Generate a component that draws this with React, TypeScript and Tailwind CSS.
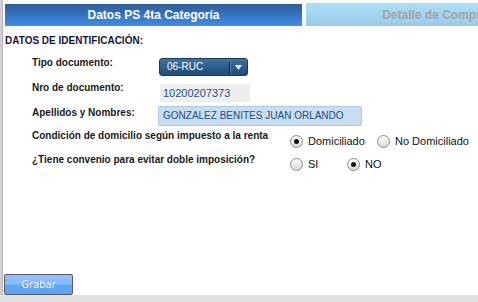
const arial = "font-['Liberation_Sans',Arial,sans-serif]";

function Radio({ checked }: { checked?: boolean }) {
  return (
    <span className="flex h-[13px] w-[13px] shrink-0 items-center justify-center rounded-full border border-[#8c8c8c] bg-gradient-to-b from-[#ffffff] to-[#dadada]">
      {checked && <span className="h-[5px] w-[5px] rounded-full bg-[#111]" />}
    </span>
  );
}

function RadioItem({ label, checked, w }: { label: string; checked?: boolean; w: string }) {
  return (
    <div className={`flex items-center gap-[5px] ${w}`}>
      <Radio checked={checked} />
      <span className="whitespace-nowrap text-[11px] leading-[13px] text-[#111]">{label}</span>
    </div>
  );
}

export default function App() {
  return (
    <div className={`flex h-[302px] w-[478px] flex-col overflow-hidden bg-white ${arial}`}>
      {/* main panel with left border */}
      <div className="flex flex-1 flex-col shadow-[inset_2px_0_0_#d2d2d2,inset_3px_0_0_#b4b4b4] pl-[3px]">
        {/* tabs */}
        <div className="flex items-start gap-[4px] overflow-hidden pl-[2px] pt-[3px]">
          <div className="mt-[1px] flex h-[22px] w-[297px] shrink-0 items-center justify-center bg-gradient-to-b from-[#2d5c9c] to-[#3d8de9] text-[12px] font-bold text-white">
            Datos PS 4ta Categoría
          </div>
          <div className="flex h-[23px] w-[297px] shrink-0 items-center justify-center bg-gradient-to-b from-[#aadff7] to-[#9bcae9] text-[12px] font-bold text-[#a4a4a4]">
            <span className="whitespace-nowrap">Detalle de Comprobantes</span>
          </div>
        </div>

        <div className="mt-[9px] pl-[2px] text-[10px] font-bold leading-[12px] text-[#16163a]">
          DATOS DE IDENTIFICACIÓN:
        </div>

        <div className="mt-[10px] flex flex-col pl-[29px] text-[10px] font-bold leading-[12px] text-[#1a1a1a]">
          {/* Tipo documento */}
          <div className="flex h-[25px] items-start">
            <div className="w-[127px]">Tipo documento:</div>
            <div className="mt-[1px] flex h-[18px] w-[89px] items-center rounded-[3px] border border-[#1b3957] bg-gradient-to-b from-[#3e72a2] to-[#1f4b77] pl-[7px] font-normal text-white">
              <span className="flex-1">06-RUC</span>
              <span className="h-[11px] w-px bg-[#0d1a28] shadow-[1px_0_0_#5b86ad]" />
              <svg className="mx-[5px]" width="7" height="5" viewBox="0 0 7 5">
                <path d="M0 0h7L3.5 5z" fill="#e8eef5" />
              </svg>
            </div>
          </div>
          {/* Nro de documento */}
          <div className="flex h-[24px] items-start">
            <div className="w-[128px]">Nro de documento:</div>
            <div className="mt-[2px] flex h-[18px] w-[90px] items-center bg-[#eeeeee] pl-[3px] text-[11px] font-normal text-[#1f4f8c]">
              10200207373
            </div>
          </div>
          {/* Apellidos */}
          <div className="flex h-[24px] items-start">
            <div className="mt-[1px] w-[126px]">Apellidos y Nombres:</div>
            <div className="flex h-[20px] w-[204px] items-center whitespace-nowrap rounded-[2px] border border-[#a9caec] bg-[#c9ddf0] pl-[4px] text-[10px] font-normal text-[#1f4f8c]">
              GONZALEZ BENITES JUAN ORLANDO
            </div>
          </div>
          {/* Condición */}
          <div className="flex h-[24px] items-start">
            <div className="w-[258px] whitespace-nowrap">Condición de domicilio según impuesto a la renta</div>
            <div className="mt-[5px] flex font-normal">
              <RadioItem label="Domiciliado" checked w="w-[87px]" />
              <RadioItem label="No Domiciliado" w="w-[92px]" />
            </div>
          </div>
          {/* Convenio */}
          <div className="flex h-[24px] items-start">
            <div className="w-[258px] whitespace-nowrap">¿Tiene convenio para evitar doble imposición?</div>
            <div className="mt-[4px] flex font-normal">
              <RadioItem label="SI" w="w-[57px]" />
              <RadioItem label="NO" checked w="w-[40px]" />
            </div>
          </div>
        </div>

        <div className="mt-auto pl-[1px]">
          <button className="flex h-[21px] w-[69px] items-center justify-center rounded-[2px] border border-[#5a5a5a] bg-[linear-gradient(#93c2ff_0%,#86bbff_48%,#62a9f6_52%,#5aa4f4_100%)] font-['DejaVu_Sans',Verdana,sans-serif] text-[10px] text-white [text-shadow:0_0_1px_#4a76b0]">
            Grabar
          </button>
        </div>
      </div>
      <div className="h-[7px] shrink-0 bg-[#e0e0e0]" />
    </div>
  );
}
